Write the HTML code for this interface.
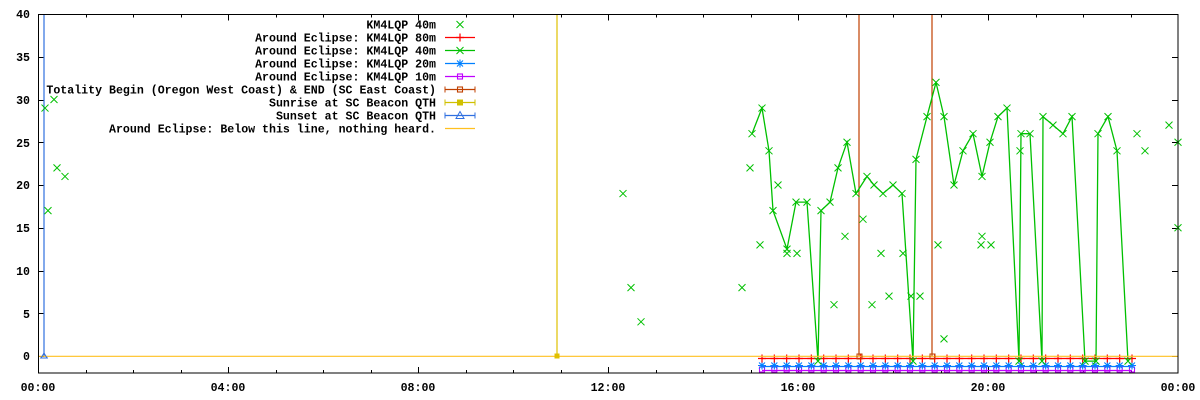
<!DOCTYPE html>
<html><head><meta charset="utf-8">
<style>
html,body{margin:0;padding:0;background:#fff;}
svg{display:block;}
text{font-family:"Liberation Mono",monospace;font-weight:bold;font-size:11.6px;fill:#000;}
</style></head>
<body>
<svg id="s" width="1200" height="400" viewBox="0 0 1200 400" xmlns="http://www.w3.org/2000/svg">
<rect width="1200" height="400" fill="#fff"/>
<g id="ticks" stroke="#000" stroke-width="1"></g>
<!-- y labels -->
<g text-anchor="end">
<text x="30" y="18">40</text>
<text x="30" y="61">35</text>
<text x="30" y="104">30</text>
<text x="30" y="147">25</text>
<text x="30" y="189">20</text>
<text x="30" y="232">15</text>
<text x="30" y="275">10</text>
<text x="30" y="318">5</text>
<text x="30" y="360">0</text>
</g>
<g text-anchor="middle">
<text x="38" y="391">00:00</text>
<text x="228" y="391">04:00</text>
<text x="418" y="391">08:00</text>
<text x="608" y="391">12:00</text>
<text x="798" y="391">16:00</text>
<text x="988" y="391">20:00</text>
<text x="1178" y="391">00:00</text>
</g>
<!-- vertical lines -->
<line x1="44" y1="14" x2="44" y2="356" stroke="#3070e0" stroke-width="1.2"/>
<line x1="557" y1="14" x2="557" y2="356" stroke="#e0c000" stroke-width="1.2"/>
<line x1="859" y1="14" x2="859" y2="356" stroke="#c04000" stroke-width="1.2"/>
<line x1="932" y1="14" x2="932" y2="356" stroke="#c04000" stroke-width="1.2"/>
<g id="data"></g>
<!-- zero line -->
<line x1="38" y1="356.3" x2="1178" y2="356.3" stroke="#ffc020" stroke-width="1.2"/>
<rect x="857" y="354" width="5" height="5" fill="none" stroke="#c04000"/>
<rect x="930" y="354" width="5" height="5" fill="none" stroke="#c04000"/>
<rect x="554.5" y="353.5" width="5" height="5" fill="#e0c000"/>
<path d="M44 353 L41 358 L47 358 Z" fill="none" stroke="#3070e0"/>
<line x1="40" y1="358" x2="48" y2="358" stroke="#3070e0"/>
<!-- legend -->
<g text-anchor="end">
<text x="436" y="28.5">KM4LQP 40m</text>
<text x="436" y="41.5">Around Eclipse: KM4LQP 80m</text>
<text x="436" y="54.5">Around Eclipse: KM4LQP 40m</text>
<text x="436" y="67.5">Around Eclipse: KM4LQP 20m</text>
<text x="436" y="80.5">Around Eclipse: KM4LQP 10m</text>
<text x="436" y="93.5">Totality Begin (Oregon West Coast) &amp; END (SC East Coast)</text>
<text x="436" y="106.5">Sunrise at SC Beacon QTH</text>
<text x="436" y="119.5">Sunset at SC Beacon QTH</text>
<text x="436" y="132.5">Around Eclipse: Below this line, nothing heard.</text>
</g>
<g id="leg"></g>
<rect x="38.5" y="14.5" width="1139.5" height="358.5" fill="none" stroke="#000" stroke-width="1"/>
</svg>
<script>
var NS="http://www.w3.org/2000/svg";
function el(p,t,a){var e=document.createElementNS(NS,t);for(var k in a)e.setAttribute(k,a[k]);p.appendChild(e);return e;}
var T=document.getElementById("ticks"),D=document.getElementById("data"),L=document.getElementById("leg");
function Y(v){return 356-8.55*v;}
// y ticks
for(var v=0;v<=40;v+=5){var y=Math.round(Y(v))+0.5;el(T,"line",{x1:38,y1:y,x2:44,y2:y});el(T,"line",{x1:1172,y1:y,x2:1178,y2:y});}
for(var h=1;h<24;h++){var x=Math.round(38+47.5*h)+0.5;var l=(h%4==0)?6:3;el(T,"line",{x1:x,y1:373,x2:x,y2:373-l});el(T,"line",{x1:x,y1:14.5,x2:x,y2:14.5+l});}
function X(p,x,y,c,s){s=s||3.5;el(p,"path",{d:"M"+(x-s)+" "+(y-s)+"L"+(x+s)+" "+(y+s)+"M"+(x-s)+" "+(y+s)+"L"+(x+s)+" "+(y-s),stroke:c,"stroke-width":1,fill:"none"});}
function P(p,x,y,c){el(p,"path",{d:"M"+(x-4)+" "+y+"L"+(x+4)+" "+y+"M"+x+" "+(y-4)+"L"+x+" "+(y+4),stroke:c,"stroke-width":1.2,fill:"none"});}
function S(p,x,y,c){el(p,"path",{d:"M"+(x-4)+" "+y+"L"+(x+4)+" "+y+"M"+x+" "+(y-4)+"L"+x+" "+(y+4)+"M"+(x-3)+" "+(y-3)+"L"+(x+3)+" "+(y+3)+"M"+(x-3)+" "+(y+3)+"L"+(x+3)+" "+(y-3),stroke:c,"stroke-width":1.1,fill:"none"});}
function Q(p,x,y,c){el(p,"rect",{x:x-2.5,y:y-2.5,width:5,height:5,stroke:c,fill:"none","stroke-width":1.1});}
// magenta, blue, red series
var x0=762,x1=1132,n=30,dx=(x1-x0)/n;
el(D,"line",{x1:x0,y1:370.5,x2:x1,y2:370.5,stroke:"#c000ff","stroke-width":1.3});
el(D,"line",{x1:x0,y1:366.5,x2:x1,y2:366.5,stroke:"#0080ff","stroke-width":1.3});
el(D,"line",{x1:x0,y1:358.5,x2:x1,y2:358.5,stroke:"#ff0000","stroke-width":1.3});
for(var i=0;i<=n;i++){var x=x0+i*dx;Q(D,x,369.5,"#c000ff");S(D,x,365.5,"#0080ff");P(D,x,358.5,"#ff0000");}
// green line
var g=[[752,26],[762,29],[769,24],[773,17],[787,12.5],[796,18],[807,18],[818,-0.6],[821,17],[830,18],[838,22],[847,25],[856,19],[867,21],[874,20],[883,19],[893,20],[902,19],[913,-0.6],[916,23],[927,28],[936,32],[944,28],[954,20],[963,24],[973,26],[982,21],[990,25],[998,28],[1007,29],[1019,-0.6],[1021,26],[1030,26],[1042,-0.6],[1043,28],[1053,27],[1063,26],[1072,28],[1085,-0.6],[1096,-0.6],[1098,26],[1108,28],[1117,24],[1128,-0.6]];
var d="";g.forEach(function(p,i){d+=(i?"L":"M")+p[0]+" "+Y(p[1]).toFixed(1);});
el(D,"path",{d:d,stroke:"#00c000","stroke-width":1.3,fill:"none"});
g.forEach(function(p){X(D,p[0],Y(p[1]),"#00c000");});
// scatter
var sc=[[45,29],[54,30],[57,22],[65,21],[48,17],[623,19],[631,8],[641,4],[742,8],[750,22],[760,13],[778,20],[787,12],[797,12],[834,6],[845,14],[863,16],[872,6],[881,12],[889,7],[903,12],[911,7],[920,7],[938,13],[944,2],[981,13],[982,14],[991,13],[1020,24],[1137,26],[1145,24],[1169,27],[1178,25],[1178,15]];
sc.forEach(function(p){X(D,p[0],Y(p[1]),"#00c000");});
// legend samples
var ly=[24.5,37.5,50.5,63.5,76.5,89.5,102.5,115.5,128.5];
X(L,460,ly[0],"#00c000");
var lc=["#ff0000","#00c000","#0080ff","#c000ff","#c04000","#d0c000","#3070e0","#ffc020"];
for(var i=1;i<9;i++){var y=ly[i],c=lc[i-1];el(L,"line",{x1:445,y1:y,x2:475,y2:y,stroke:c,"stroke-width":1.2});
 if(i>=5&&i<=7){el(L,"line",{x1:445,y1:y-3,x2:445,y2:y+3,stroke:c});el(L,"line",{x1:475,y1:y-3,x2:475,y2:y+3,stroke:c});}}
P(L,460,ly[1],"#ff0000");X(L,460,ly[2],"#00c000");S(L,460,ly[3],"#0080ff");Q(L,460,ly[4],"#c000ff");Q(L,460,ly[5],"#c04000");
el(L,"rect",{x:457,y:ly[6]-3,width:6,height:6,fill:"#d0c000"});
el(L,"path",{d:"M460 "+(ly[7]-4)+"L456 "+(ly[7]+3)+"L464 "+(ly[7]+3)+"Z",fill:"none",stroke:"#3070e0"});
</script>
</body></html>
